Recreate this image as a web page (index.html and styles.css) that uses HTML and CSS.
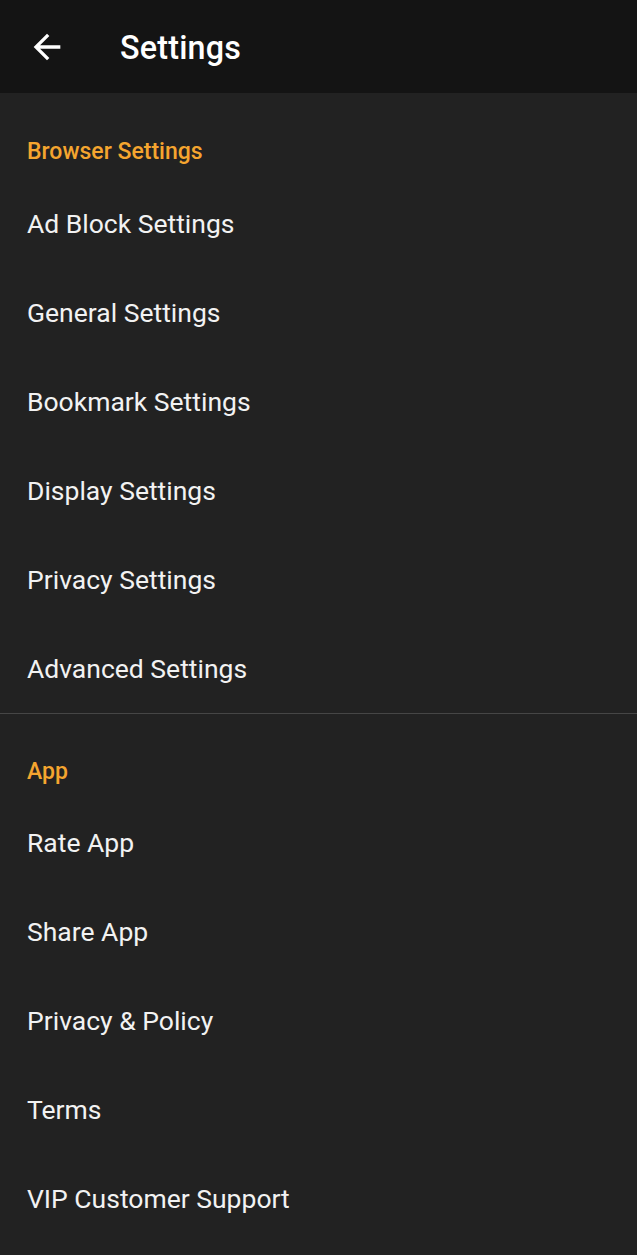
FILE: index.html
```html
<!DOCTYPE html>
<html>
<head>
<meta charset="utf-8">
<link rel="stylesheet" href="styles.css">
</head>
<body>
<header class="appbar">
  <svg class="back" viewBox="0 0 24 24" width="40" height="40"><path d="M20 11H7.83l5.59-5.59L12 4l-8 8 8 8 1.41-1.41L7.83 13H20v-2z" fill="#ffffff"/></svg>
  <h1 class="title">Settings</h1>
</header>
<main>
  <section class="group">
    <div class="cat">Browser Settings</div>
    <div class="item">Ad Block Settings</div>
    <div class="item">General Settings</div>
    <div class="item">Bookmark Settings</div>
    <div class="item">Display Settings</div>
    <div class="item">Privacy Settings</div>
    <div class="item">Advanced Settings</div>
  </section>
  <section class="group">
    <div class="cat">App</div>
    <div class="item">Rate App</div>
    <div class="item">Share App</div>
    <div class="item">Privacy &amp; Policy</div>
    <div class="item">Terms</div>
    <div class="item">VIP Customer Support</div>
  </section>
</main>
</body>
</html>
```
FILE: styles.css
```css
html, body {
  margin: 0;
  padding: 0;
  background: #222222;
  font-family: Roboto, "Noto Sans", sans-serif;
  color: #ffffff;
}
.appbar {
  height: 93px;
  background: #141414;
  display: flex;
  align-items: center;
}
.back {
  margin-left: 27px;
  flex: none;
}
.title {
  margin: 3px 0 0 53px;
  font-size: 32.3px;
  font-weight: 500;
  letter-spacing: 0.2px;
}
.group + .group {
  border-top: 1px solid #464646;
}
.cat {
  height: 86px;
  box-sizing: border-box;
  padding: 30px 27px 0;
  display: flex;
  align-items: center;
  color: #f5a52f;
  font-size: 23px;
  font-weight: 500;
}
.group + .group .cat {
  height: 84px;
}
.item {
  height: 89px;
  display: flex;
  align-items: center;
  padding: 0 27px;
  font-size: 26.5px;
  color: #f2f2f2;
}
```
